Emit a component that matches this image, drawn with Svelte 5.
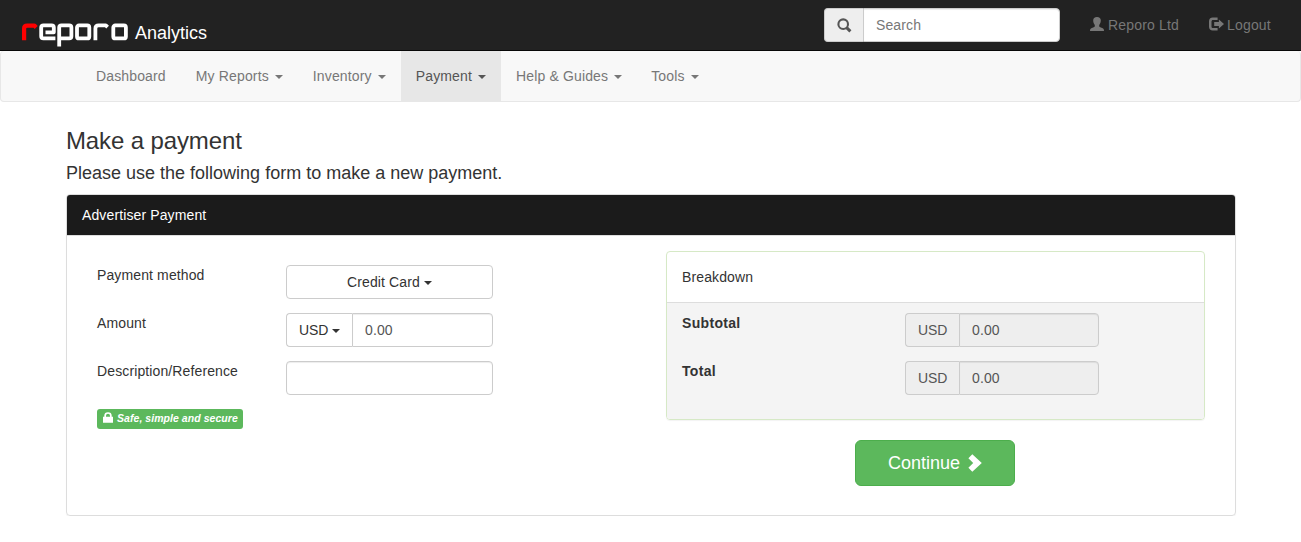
<script>
  const menu = [
    { label: 'Dashboard' },
    { label: 'My Reports', drop: true },
    { label: 'Inventory', drop: true },
    { label: 'Payment', drop: true, active: true },
    { label: 'Help & Guides', drop: true },
    { label: 'Tools', drop: true }
  ];
  const totals = ['Subtotal', 'Total'];
</script>

<header class="topbar">
  <a class="brand" href="#home">
    <svg class="logo" width="107" height="25" viewBox="0 0 107 25" aria-label="reporo">
      <g fill="none" stroke="#fff" stroke-width="3.8" stroke-linejoin="round">
        <path stroke="#f00" stroke-width="4.2" d="M2.1 17.2V5.6Q2.1 2.6 5.3 2.6H12.4L14.2 4.4" />
        <path d="M33.4 15.4H21.4Q19.2 15.4 19.2 13.2V4.6Q19.2 2.4 21.4 2.4H29.6Q31.8 2.4 31.8 4.6V9.3H23.5" />
        <path d="M37.2 23.6V4.6Q37.2 2.4 39.4 2.4H47.2Q49.4 2.4 49.4 4.6V13.2Q49.4 15.4 47.2 15.4H37.2" />
        <rect x="55" y="2.4" width="12.3" height="13" rx="2" />
        <path d="M73.4 17.2V5.6Q73.4 2.4 76.6 2.4H83.8L85.6 4.2" />
        <rect x="91.3" y="2.4" width="12.6" height="13" rx="2" />
      </g>
    </svg>
    <span>Analytics</span>
  </a>
  <div class="group search">
    <span class="addon">
      <svg width="15" height="15" viewBox="0 0 15 15" fill="none" stroke="currentColor">
        <circle cx="6.2" cy="6.2" r="4.8" stroke-width="2.1" />
        <path d="M9.6 9.6L13.4 13.4" stroke-width="3" />
      </svg>
    </span>
    <input placeholder="Search" aria-label="Search" />
  </div>
  <a class="toplink" href="#account">
    <svg width="14" height="14" viewBox="0 0 14 14" fill="currentColor">
      <path d="M7 0C9.5 0 10.8 1.3 10.8 3.6C10.8 5.5 10.1 6.9 9.2 7.9V9C9.2 9.7 9.6 10 10.3 10.3L12.7 11.3C13.7 11.8 14 12.4 14 13.9H0C0 12.4.3 11.8 1.3 11.3L3.7 10.3C4.4 10 4.8 9.7 4.8 9V7.9C3.9 6.9 3.2 5.5 3.2 3.6C3.2 1.3 4.5 0 7 0Z" />
    </svg>
    Reporo Ltd
  </a>
  <a class="toplink" href="#logout">
    <svg width="15" height="14" viewBox="0 0 15 14" fill="currentColor">
      <path d="M8.6 3V.6H3.8C1.4.6 0 2 0 4.3V9.7C0 12 1.4 13.4 3.8 13.4H8.6V11H4.1C3 11 2.5 10.5 2.5 9.4V4.6C2.5 3.5 3 3 4.1 3Z" />
      <path d="M5.2 5.1H9.9V2.6L15 7L9.9 11.4V8.9H5.2Z" />
    </svg>
    Logout
  </a>
</header>

<nav class="menu">
  {#each menu as item}
    <a href="#menu" class:active={item.active}>{item.label}{#if item.drop}<i class="caret"></i>{/if}</a>
  {/each}
</nav>

<main>
  <h3>Make a payment</h3>
  <h4>Please use the following form to make a new payment.</h4>
  <section class="panel">
    <div class="heading">Advertiser Payment</div>
    <div class="body">
      <form class="fields">
        <div class="row">
          <span class="name">Payment method</span>
          <button type="button" class="select">Credit Card<i class="caret"></i></button>
        </div>
        <div class="row">
          <span class="name">Amount</span>
          <div class="group amount">
            <button type="button" class="currency">USD<i class="caret"></i></button>
            <input value="0.00" aria-label="Amount" />
          </div>
        </div>
        <div class="row">
          <span class="name">Description/Reference</span>
          <div class="group amount"><input class="solo" aria-label="Description" /></div>
        </div>
        <em class="badge">
          <svg width="10" height="11" viewBox="0 0 10 11">
            <path fill="#fff" d="M0 4.8H1.3V3.6Q1.3.2 5 .2Q8.7.2 8.7 3.6V4.8H10V10.8H0ZM3 4.8H7V3.7Q7 1.7 5 1.7Q3 1.7 3 3.7Z" />
          </svg>
          <span>Safe, simple and secure</span>
        </em>
      </form>
      <div class="summary">
        <div class="breakdown">
          <div class="title">Breakdown</div>
          <div class="totals">
            {#each totals as name}
              <div class="total">
                <strong>{name}</strong>
                <div class="group readonly">
                  <span class="addon">USD</span>
                  <input value="0.00" readonly aria-label={name} />
                </div>
              </div>
            {/each}
          </div>
        </div>
        <button type="button" class="continue">
          Continue
          <svg width="14" height="18" viewBox="0 0 14 18"><path fill="#fff" d="M.4 4.2L4.3 .2L13.8 9L4.3 17.8L.4 13.8L5.2 9Z" /></svg>
        </button>
      </div>
    </div>
  </section>
</main>

<style>
  :global(body) { background: #fff; }
  :global(#app) {
    font: 14px/20px "Liberation Sans", Arial, sans-serif;
    letter-spacing: .12px;
    color: #333;
  }
  :global(#app *) { box-sizing: border-box; }
  a { text-decoration: none; }
  svg { display: block; flex: none; }
  input, button { font: inherit; letter-spacing: inherit; margin: 0; outline: 0; }
  .topbar {
    display: flex;
    height: 51px;
    background: #222;
    border-bottom: 1px solid #080808;
    padding: 0 15px 0 22px;
  }
  .brand {
    display: flex;
    color: #fff;
    font-size: 18px;
    letter-spacing: 0;
    margin-right: auto;
    padding-top: 23px;
    gap: 6px;
  }
  .group { display: flex; height: 34px; }
  .group input {
    flex: 1;
    min-width: 0;
    border: 1px solid #ccc;
    border-radius: 0 4px 4px 0;
    padding: 6px 12px;
    color: #555;
    background: #fff;
    box-shadow: inset 0 1px 1px rgba(0, 0, 0, .075);
  }
  .group input::placeholder { color: #777; opacity: 1; }
  .addon {
    display: flex;
    align-items: center;
    padding: 0 12px;
    border: 1px solid #ccc;
    border-right: 0;
    border-radius: 4px 0 0 4px;
    background: #eee;
    color: #555;
    letter-spacing: -.1px;
  }
  .search { width: 236px; margin: 8px 15px 0 0; }
  .search .addon { width: 39px; }
  .toplink {
    display: flex;
    gap: 4px;
    width: 119px;
    padding: 15px;
    color: #777;
    letter-spacing: .18px;
    white-space: nowrap;
  }
  .toplink svg { margin-top: 2px; }
  .toplink:last-child { gap: 3px; width: 92px; }
  .menu {
    display: flex;
    height: 51px;
    padding-left: 80px;
    background: #f8f8f8;
    border: 1px solid #e7e7e7;
    border-top: 0;
    border-radius: 4px;
    letter-spacing: .145px;
  }
  .menu a { padding: 15px; color: #777; }
  .menu a.active { background: #e7e7e7; color: #555; }
  .menu a:last-child { margin-left: -1px; }
  .caret {
    display: inline-block;
    border: 4px solid transparent;
    border-top-color: currentColor;
    border-bottom: 0;
    margin-left: 4px;
    vertical-align: middle;
  }
  .menu .caret { margin-left: 6px; }
  main { width: 1170px; margin: 26px 0 0 66px; }
  h3, h4 { font-weight: 400; line-height: 1.1; margin: 0 0 10px; }
  h3 { font-size: 24px; letter-spacing: -.12px; }
  h4 { font-size: 18px; letter-spacing: 0; }
  .panel {
    height: 322px;
    border: 1px solid #ddd;
    border-radius: 4px;
    box-shadow: 0 1px 1px rgba(0, 0, 0, .05);
  }
  .heading {
    height: 41px;
    padding: 10px 15px;
    background: #1b1b1b;
    color: #fff;
    border-bottom: 1px solid #ddd;
    border-radius: 3px 3px 0 0;
  }
  .body { display: flex; justify-content: space-between; padding: 15px 30px; }
  .fields { width: 396px; padding-top: 14px; }
  .row { display: flex; justify-content: space-between; margin-bottom: 14px; }
  .amount, .select { width: 207px; }
  .select, .currency {
    height: 34px;
    padding: 0 12px;
    border: 1px solid #ccc;
    background: #fff;
    color: #333;
    border-radius: 4px;
    white-space: nowrap;
  }
  .currency { border-right: 0; border-radius: 4px 0 0 4px; width: 66px; letter-spacing: -.1px; }
  .currency .caret { margin-left: 4px; }
  .group .solo { border-radius: 4px; }
  .badge {
    display: flex;
    width: 146px;
    height: 20px;
    padding: 3px 6px;
    gap: 4px;
    border-radius: 3px;
    background: #5cb85c;
    color: #fff;
    font-size: 10.5px;
    font-weight: 700;
    letter-spacing: .05px;
    line-height: 13px;
    white-space: nowrap;
  }
  .summary { display: flex; flex-direction: column; width: 539px; }
  .breakdown {
    height: 169px;
    display: flex;
    flex-direction: column;
    border: 1px solid #d6e9c6;
    border-radius: 4px;
    box-shadow: 0 1px 1px rgba(0, 0, 0, .05);
  }
  .title { height: 51px; padding: 15px; border-bottom: 1px solid #ddd; }
  .totals { flex: 1; padding: 10px 15px; background: #f4f4f4; border-radius: 0 0 3px 3px; }
  .total { display: flex; justify-content: space-between; padding-right: 90px; margin-bottom: 14px; }
  .total strong { letter-spacing: .32px; }
  .readonly { width: 194px; }
  .readonly .addon { width: 54px; }
  .readonly input { background: #eee; }
  .continue {
    display: flex;
    align-items: center;
    justify-content: center;
    gap: 8px;
    width: 160px;
    height: 46px;
    margin: 20px 0 0 189px;
    padding: 0;
    border: 1px solid #4cae4c;
    border-radius: 6px;
    background: #5cb85c;
    color: #fff;
    font-size: 18px;
    letter-spacing: 0;
  }
</style>
